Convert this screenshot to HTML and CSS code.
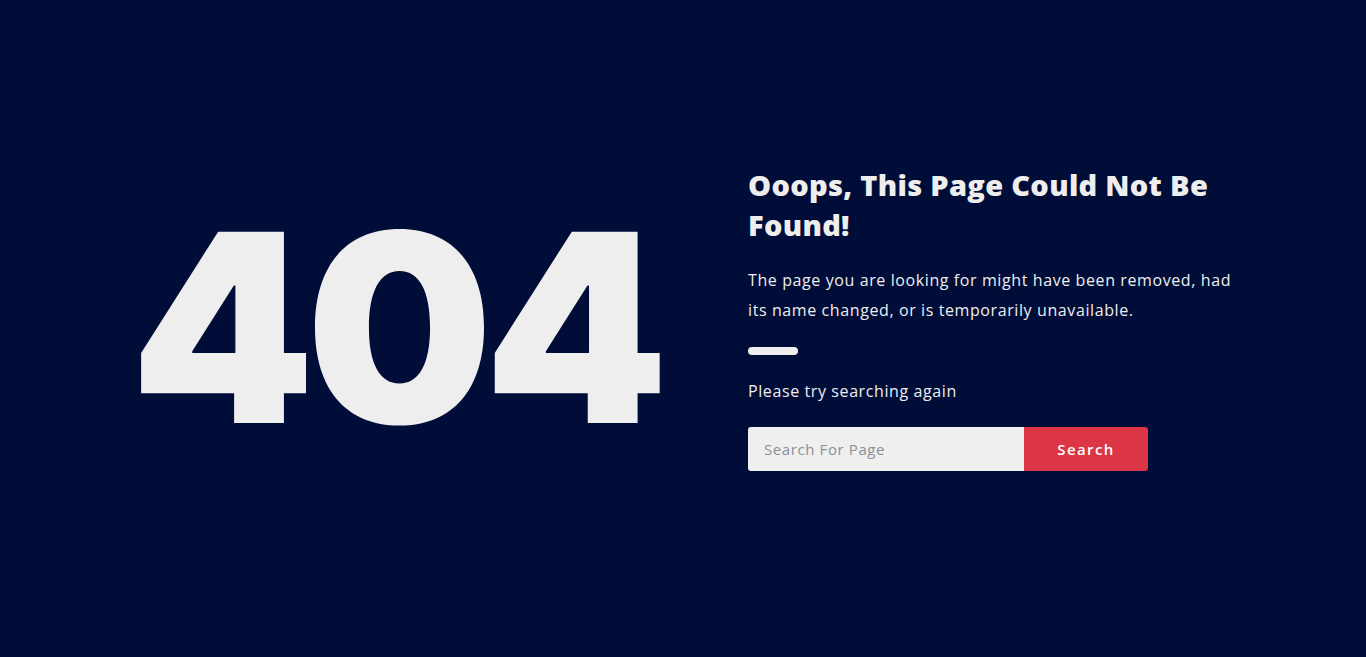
FILE: index.html
```html
<!DOCTYPE html>
<html lang="en">
<head>
<meta charset="utf-8">
<title>404</title>
<link rel="stylesheet" href="styles.css">
</head>
<body>
<main class="page">
  <section class="code-col">
    <div class="code">404</div>
  </section>
  <section class="info-col">
    <h1 class="title">Ooops, This Page Could Not Be Found!</h1>
    <p class="lead">The page you are looking for might have been removed, had its name changed, or is temporarily unavailable.</p>
    <div class="divider"></div>
    <p class="hint">Please try searching again</p>
    <form class="search">
      <input class="search-input" type="text" placeholder="Search For Page">
      <button class="search-btn" type="button">Search</button>
    </form>
  </section>
</main>
</body>
</html>
```
FILE: styles.css
```css
* { box-sizing: border-box; }
html, body { margin: 0; padding: 0; }
body {
  background: #000d38;
  color: #eeeeee;
  font-family: "Open Sans", "Liberation Sans", sans-serif;
}
.page {
  width: 1140px;
  margin: 0 auto;
  height: 657px;
  display: flex;
  align-items: center;
}
.code-col {
  width: 570px;
  display: flex;
  justify-content: center;
  padding-bottom: 2px;
  padding-right: 6px;
}
.code {
  font-family: "Inter", "Liberation Sans", sans-serif;
  font-weight: 900;
  font-size: 263px;
  line-height: 1;
  color: #eeeeee;
  letter-spacing: -9px;
}
.info-col {
  width: 570px;
  padding-left: 65px;
  padding-right: 15px;
  padding-bottom: 21px;
}
.title {
  margin: 0;
  font-family: "Open Sans", sans-serif;
  font-weight: 800;
  font-size: 29px;
  line-height: 40px;
  letter-spacing: 0.3px;
  color: #eeeeee;
}
.lead {
  margin: 20px 0 0;
  font-size: 16px;
  line-height: 30px;
  letter-spacing: 0.6px;
  color: #eeeeee;
}
.divider {
  width: 50px;
  height: 8px;
  border-radius: 4px;
  background: #eeeeee;
  margin-top: 22px;
}
.hint {
  margin: 21px 0 0;
  font-size: 16px;
  line-height: 30px;
  letter-spacing: 0.6px;
}
.search {
  display: flex;
  margin-top: 21px;
  width: 400px;
  height: 44px;
}
.search-input {
  width: 276px;
  height: 44px;
  border: 0;
  border-radius: 3px 0 0 3px;
  background: #efefef;
  padding: 0 16px;
  font-family: "Open Sans", sans-serif;
  font-size: 15px;
  letter-spacing: 0.6px;
  color: #333;
  outline: none;
}
.search-input::placeholder { color: #8a8f99; }
.search-btn {
  width: 124px;
  height: 44px;
  border: 0;
  border-radius: 0 3px 3px 0;
  background: #dc3545;
  color: #ffffff;
  font-family: "Open Sans", sans-serif;
  font-size: 15px;
  font-weight: 600;
  letter-spacing: 1.4px;
}
```
